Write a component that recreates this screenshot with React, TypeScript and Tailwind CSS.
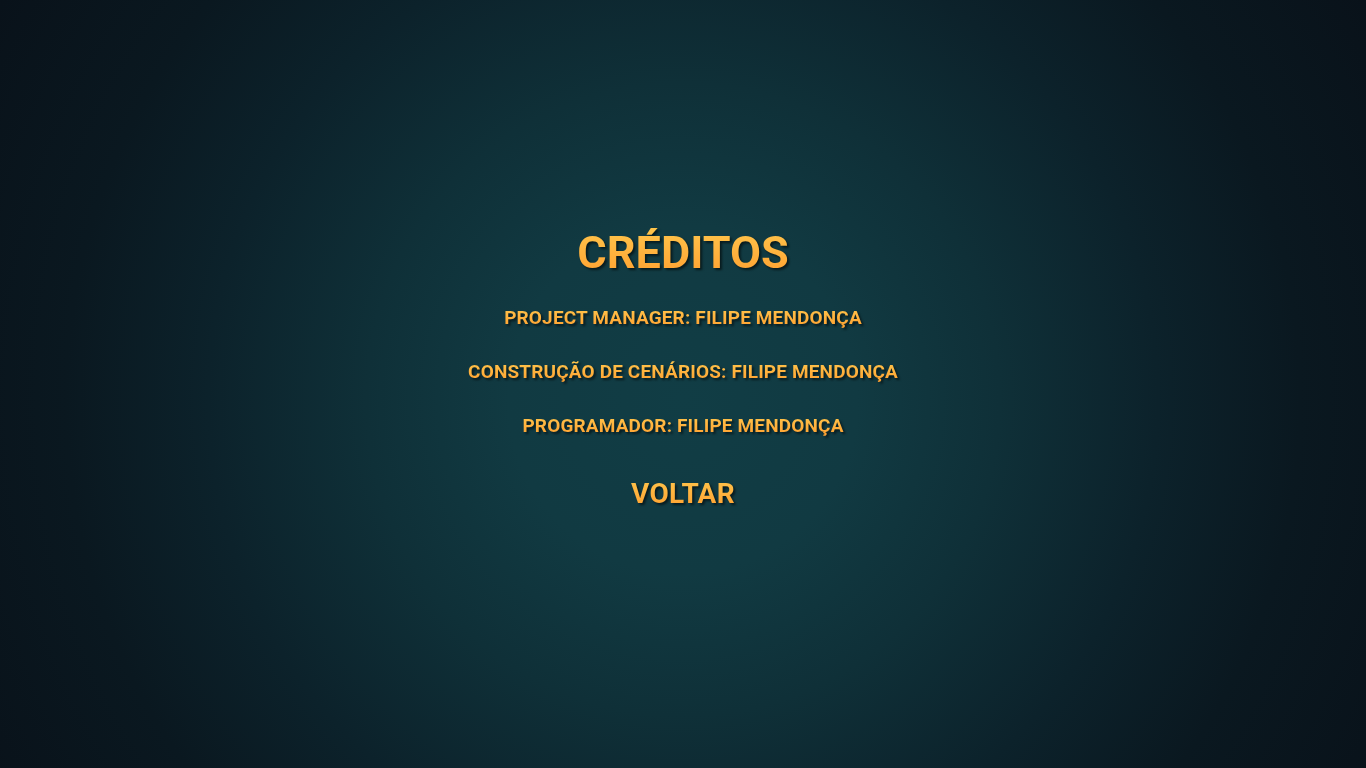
export default function App() {
  const grad =
    "bg-gradient-to-b from-[#ffc64c] to-[#ff9e2e] bg-clip-text text-transparent drop-shadow-[2px_2px_1px_rgba(0,0,0,0.55)]";

  return (
    <div
      className="w-full h-screen flex flex-col items-center bg-[radial-gradient(circle_at_50%_52%,#113d45_0%,#113a42_22%,#0f3038_40%,#0c222b_60%,#0a1820_78%,#09121a_100%)]"
      style={{ fontFamily: "Roboto, 'Liberation Sans', sans-serif" }}
    >
      <h1 className={`mt-[226px] text-[45px] leading-[54px] font-bold ${grad}`}>CRÉDITOS</h1>

      <div className="mt-[27px] flex flex-col items-center gap-[32px]">
        <p className={`text-[19px] leading-[22px] font-bold tracking-[0.15px] ${grad}`}>
          PROJECT MANAGER: FILIPE MENDONÇA
        </p>
        <p className={`text-[19px] leading-[22px] font-bold tracking-[0.15px] ${grad}`}>
          CONSTRUÇÃO DE CENÁRIOS: FILIPE MENDONÇA
        </p>
        <p className={`text-[19px] leading-[22px] font-bold tracking-[0.15px] ${grad}`}>
          PROGRAMADOR: FILIPE MENDONÇA
        </p>
      </div>

      <button className={`mt-[40px] text-[28px] leading-[34px] font-bold tracking-[0.3px] ${grad}`}>VOLTAR</button>
    </div>
  );
}
